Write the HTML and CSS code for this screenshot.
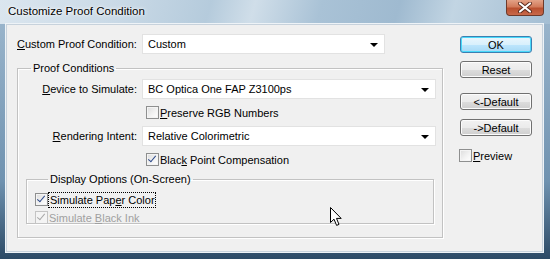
FILE: index.html
```html
<!DOCTYPE html>
<html lang="en">
<head>
    <meta charset="UTF-8">
    <title>Customize Proof Condition</title>
    <link rel="stylesheet" href="styles.css">
</head>
<body>
    <div class="window">
        <div class="titlebar">
            <span class="title">Customize Proof Condition</span>
            <div class="close">
                <svg width="16" height="11" viewBox="0 0 16 11">
                    <path d="M3 1.5 L13 9.5 M13 1.5 L3 9.5" stroke="#5a2a1c" stroke-width="4" stroke-linecap="round"/>
                    <path d="M3 1.5 L13 9.5 M13 1.5 L3 9.5" stroke="#fff" stroke-width="2.2" stroke-linecap="round"/>
                </svg>
            </div>
        </div>
        <div class="frame">
            <div class="client">
                <div class="left">
                    <div class="row top-row">
                        <label class="lbl-top"><u>C</u>ustom Proof Condition:</label>
                        <div class="select custom-select">Custom<span class="arrow"></span></div>
                    </div>

                    <fieldset class="group proof">
                        <legend>Proof Conditions</legend>
                        <div class="row">
                            <label class="lbl"><u>D</u>evice to Simulate:</label>
                            <div class="select wide-select">BC Optica One FAP Z3100ps<span class="arrow"></span></div>
                        </div>
                        <div class="check-row indent">
                            <span class="box"></span><span><u>P</u>reserve RGB Numbers</span>
                        </div>
                        <div class="row">
                            <label class="lbl"><u>R</u>endering Intent:</label>
                            <div class="select wide-select">Relative Colorimetric<span class="arrow"></span></div>
                        </div>
                        <div class="check-row indent">
                            <span class="box checked"></span><span>Blac<u>k</u> Point Compensation</span>
                        </div>

                        <fieldset class="group display">
                            <legend>Display Options (On-Screen)</legend>
                            <div class="check-row">
                                <span class="box checked"></span><span class="focus">Simulate Pap<u>e</u>r Color</span>
                            </div>
                            <div class="check-row disabled">
                                <span class="box checked"></span><span>Simulate <u>B</u>lack Ink</span>
                            </div>
                        </fieldset>
                    </fieldset>
                </div>

                <div class="right">
                    <button class="btn default-btn">OK</button>
                    <button class="btn reset-btn">Reset</button>
                    <button class="btn prev-btn">&lt;-Default</button>
                    <button class="btn next-btn">-&gt;Default</button>
                    <div class="check-row preview">
                        <span class="box"></span><span><u>P</u>review</span>
                    </div>
                </div>
            </div>
        </div>

        <svg class="cursor" width="13" height="20" viewBox="0 0 13 20">
            <path d="M0.5 0.5 L0.5 15.5 L4 12.2 L6.6 18.4 L9 17.4 L6.5 11.4 L11.2 11.4 Z" fill="#fff" stroke="#000" stroke-width="1"/>
        </svg>
    </div>
</body>
</html>
```

FILE: styles.css
```css
html, body {
    margin: 0;
    padding: 0;
}
body {
    width: 550px;
    height: 259px;
    overflow: hidden;
    font-family: "Liberation Sans", Arial, sans-serif;
    font-size: 11px;
    color: #000;
}
.window {
    position: relative;
    width: 550px;
    height: 259px;
    background: linear-gradient(180deg, #9fb9cf 0%, #6f92b0 70%, #2c4a66 100%);
}
.titlebar {
    height: 24px;
    display: flex;
    align-items: flex-start;
    justify-content: space-between;
    background: linear-gradient(105deg, #dbe6ef 0%, #c9d9e6 22%, #b5cbdc 38%, #d0dee9 46%, #a9c2d6 58%, #9fbad0 72%, #c2d5e3 82%, #a4bed3 100%);
}
.title {
    padding: 5px 0 0 8px;
    font-family: "Liberation Sans", Arial, sans-serif;
    font-size: 11.5px;
    text-shadow: 0 0 4px #fff, 0 0 2px #fff;
}
.close {
    width: 38px;
    height: 16px;
    margin-right: 6px;
    box-sizing: border-box;
    border: 1px solid #6e3a2a;
    border-top: none;
    border-radius: 0 0 4px 4px;
    background: linear-gradient(180deg, #e3a287 0%, #d27b5b 45%, #b9502f 55%, #c8694a 100%);
    display: flex;
    justify-content: center;
    align-items: center;
}
.frame {
    height: 235px;
    padding: 0 7px 0 6px;
}
.client {
    height: 228px;
    box-sizing: border-box;
    border: 1px solid #c7d2dc;
    box-shadow: 0 0 0 1px #eef3f7;
    background: #f0f0f0;
    display: flex;
    padding: 9px 10px 0 10px;
}
.left {
    width: 427px;
}
.row {
    display: flex;
    align-items: center;
}
.lbl-top {
    width: 125px;
}
.lbl {
    width: 119px;
    margin-right: 5px;
    text-align: right;
}
u {
    text-decoration: underline;
    text-underline-offset: 1px;
}
.select {
    position: relative;
    height: 20px;
    box-sizing: border-box;
    border: 1px solid #e2e2e2;
    background: #fff;
    padding: 3px 0 0 5px;
    line-height: 13px;
}
.custom-select {
    width: 243px;
}
.wide-select {
    width: 294px;
}
.arrow {
    position: absolute;
    right: 6px;
    top: 8px;
    width: 0;
    height: 0;
    border-left: 4px solid transparent;
    border-right: 4px solid transparent;
    border-top: 4px solid #000;
}
.group {
    margin: 0;
    border: 1px solid #c2c2c2;
    box-shadow: 1px 1px 0 #fff, inset 1px 1px 0 #fff;
    min-width: 0;
}
.group legend {
    margin-left: 13px;
    padding: 0 2px;
    line-height: 13px;
}
.proof {
    margin-top: 8px;
    padding: 4px 0 0 0;
    height: 176px;
    box-sizing: border-box;
}
.proof .row {
    margin-bottom: 7px;
}
.check-row {
    display: flex;
    align-items: center;
    height: 13px;
}
.indent {
    margin-left: 128px;
    margin-bottom: 7px;
}
.box {
    width: 13px;
    height: 13px;
    box-sizing: border-box;
    border: 1px solid #8e8f8f;
    background: linear-gradient(135deg, #dcdcdc 0%, #f4f4f4 60%, #ffffff 100%);
    box-shadow: inset 0 0 0 1px #f4f4f4;
    margin-right: 1px;
    position: relative;
    flex: none;
}
.box.checked::after {
    content: "";
    position: absolute;
    left: 3px;
    top: 0px;
    width: 3px;
    height: 7px;
    border-right: 1.5px solid #2d4a8a;
    border-bottom: 1.5px solid #2d4a8a;
    transform: rotate(40deg);
}
.disabled {
    color: #a0a0a0;
}
.disabled .box {
    border-color: #c4c4c4;
    background: #f4f4f4;
}
.disabled .box.checked::after {
    border-color: #a8a8a8;
}
.display {
    margin: 6px 8px 0 8px;
    padding: 7px 0 0 8px;
    height: 51px;
    box-sizing: border-box;
}
.display .check-row {
    margin-bottom: 5px;
}
.focus {
    outline: 1px dotted #000;
    padding: 1px 0 1px 1px;
}
.right {
    margin-left: 17px;
    display: flex;
    flex-direction: column;
    width: 72px;
}
.btn {
    width: 72px;
    height: 17px;
    padding: 0;
    box-sizing: border-box;
    font-family: "Liberation Sans", Arial, sans-serif;
    font-size: 11px;
    color: #000;
    border: 1px solid #707070;
    border-radius: 3px;
    background: linear-gradient(180deg, #f2f2f2 0%, #ebebeb 50%, #dddddd 51%, #cfcfcf 100%);
    box-shadow: inset 0 0 0 1px #fcfcfc;
}
.default-btn {
    margin-top: 2px;
    border-color: #3c7fb1;
    box-shadow: inset 0 0 0 1px #48d9fa;
    background: linear-gradient(180deg, #eaf6fd 0%, #d9f0fc 50%, #bee6fd 51%, #a7d9f5 100%);
}
.reset-btn {
    margin-top: 8px;
}
.prev-btn {
    margin-top: 15px;
}
.next-btn {
    margin-top: 9px;
}
.preview {
    margin-top: 13px;
    margin-left: -1px;
}
.cursor {
    position: absolute;
    left: 330px;
    top: 207px;
}
```
